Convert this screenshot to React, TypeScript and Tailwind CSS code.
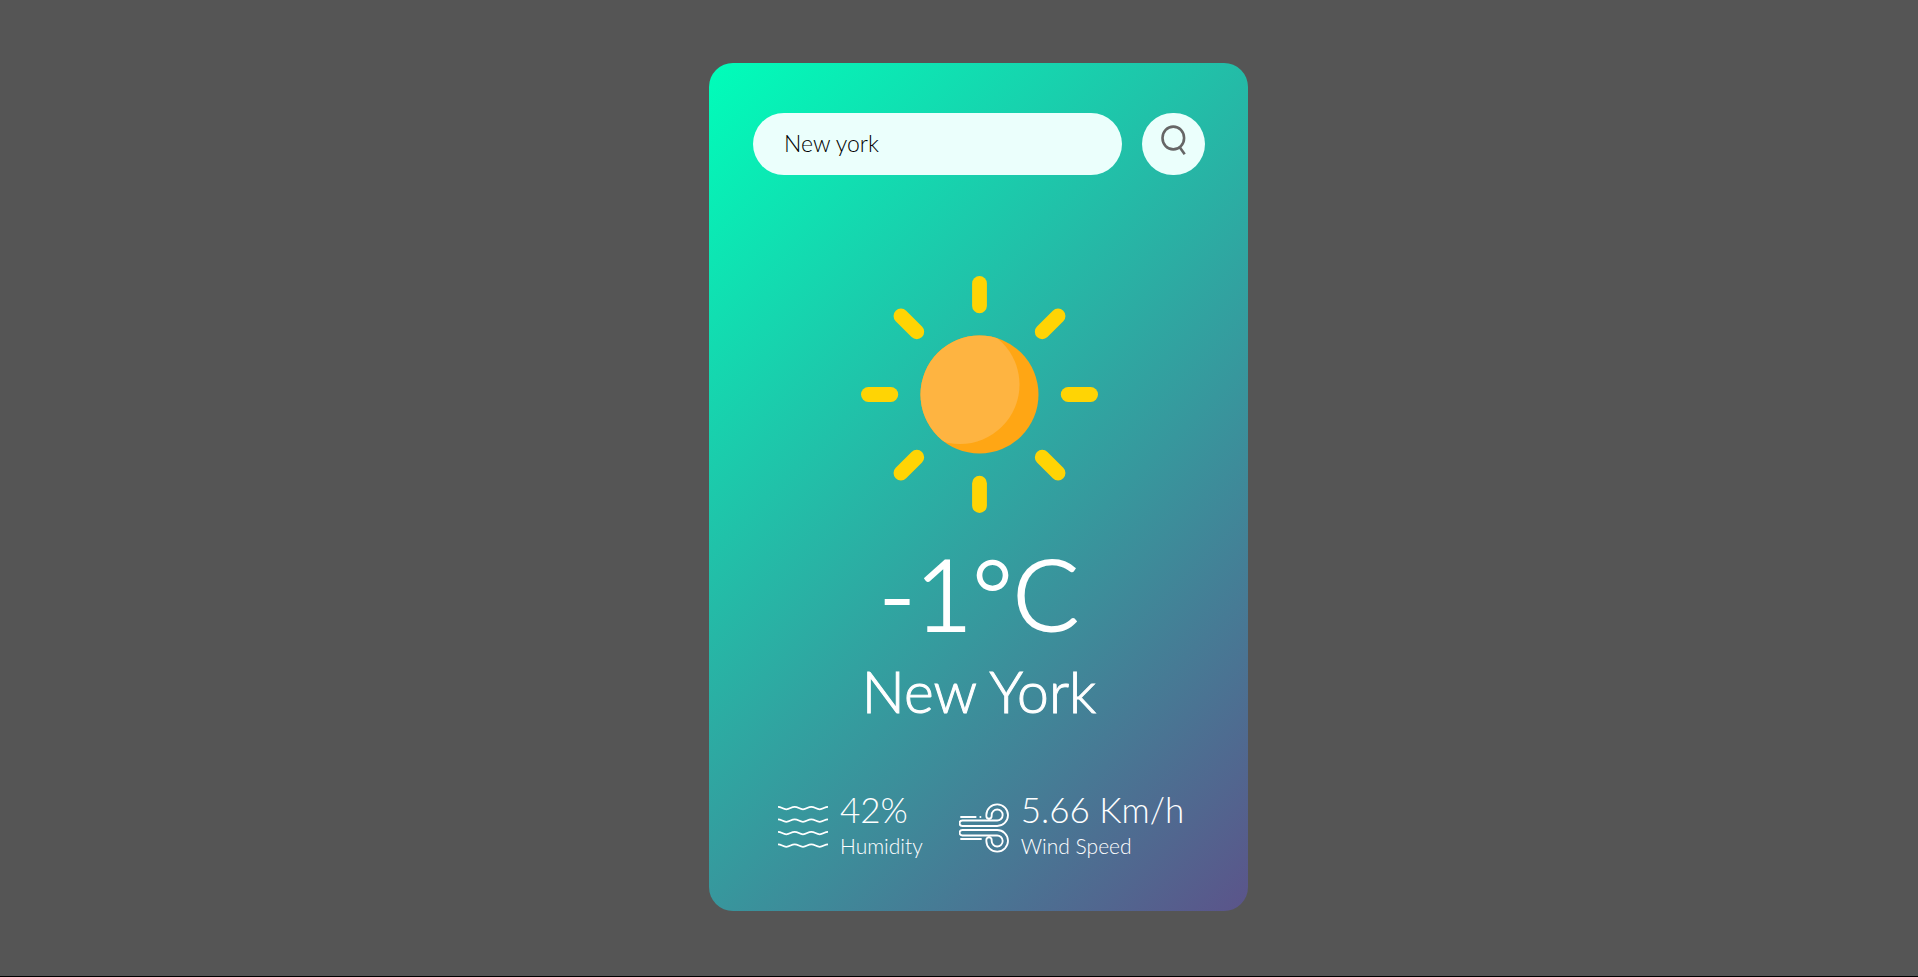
import { useState } from "react";

const rayAngles = [0, 45, 90, 135, 180, 225, 270, 315];

function SunIcon() {
  return (
    <svg className="block size-[238px]" viewBox="-119.5 -119.5 238 238" role="img" aria-label="Clear sky">
      <defs>
        <clipPath id="sun-disc">
          <circle r="59" />
        </clipPath>
      </defs>
      {rayAngles.map((angle) => (
        <rect key={angle} x="-7.4" y="-118.5" width="14.8" height="37.2" rx="7.4" fill="#ffd404" transform={`rotate(${angle})`} />
      ))}
      <circle r="59" fill="#ffa614" />
      <circle cx="-19.5" cy="-10" r="59.5" fill="#feb441" clipPath="url(#sun-disc)" />
    </svg>
  );
}

function SearchIcon() {
  return (
    <svg className="block h-8 w-[26px]" viewBox="0 0 26 32" fill="none" stroke="#666" strokeWidth="2.6" aria-hidden="true">
      <ellipse cx="12.3" cy="13" rx="10.8" ry="11.4" />
      <path d="M18.7 22.2 L23.7 29.2" />
    </svg>
  );
}

function HumidityIcon() {
  return (
    <svg className="mt-4 block size-[50px] shrink-0" viewBox="0 0 50 50" fill="none" stroke="#fff" strokeWidth="1.7" aria-hidden="true">
      {[5, 17.5, 30, 42.5].map((y) => (
        <path
          key={y}
          d={`M0 ${y - 1.2} C3.5 ${y - 1.2} 4.8 ${y + 1.3} 8.3 ${y + 1.3} S13.2 ${y - 1.2} 16.7 ${y - 1.2} S21.5 ${y + 1.3} 25 ${y + 1.3} S29.8 ${y - 1.2} 33.3 ${y - 1.2} S38.2 ${y + 1.3} 41.7 ${y + 1.3} S46.5 ${y - 1.2} 50 ${y - 1.2}`}
        />
      ))}
    </svg>
  );
}

function WindIcon() {
  return (
    <svg className="mt-4 block size-[50px] shrink-0" viewBox="54 37 150 150" fill="none" stroke="#fff" strokeWidth="5.5" strokeLinecap="round" aria-hidden="true">
      <path d="M60 79 H104 M118 79 H118.5" />
      <path d="M64 89.5 H168 A16.5 16.5 0 1 0 152 73 V76 A8 8 0 0 1 136 76 V73 A32.5 32.5 0 1 1 168 106 H64 A8.2 8.2 0 0 1 64 89.5 Z" />
      <path d="M64 134.5 H168 A16.5 16.5 0 1 1 152 151 V148 A8 8 0 0 0 136 148 V151 A32.5 32.5 0 1 0 168 118 H64 A8.2 8.2 0 0 0 64 134.5 Z" />
      <path d="M60 145 H120" />
    </svg>
  );
}

export default function App() {
  const [city, setCity] = useState("New york");

  return (
    <div className="min-h-screen border-b border-black bg-[#555] pt-[63px] pb-16 pl-[39px] font-['Lato','Nunito',sans-serif] font-light">
      <main className="mx-auto w-full max-w-[539px] rounded-3xl bg-linear-[135deg,#00feba,#5b548a] pt-[50px] pb-[50px] pr-[43px] pl-11 text-white">
        <form className="flex items-center gap-5" onSubmit={(event) => event.preventDefault()}>
          <input
            type="text"
            aria-label="City name"
            value={city}
            onChange={(event) => setCity(event.target.value)}
            className="h-[62px] min-w-0 flex-1 rounded-full bg-[#ebfffc] px-[31px] pb-0.5 text-[23px] text-black outline-none"
          />
          <button type="submit" aria-label="Search" className="flex h-[62px] w-[63px] shrink-0 justify-center rounded-full bg-[#ebfffc] pt-3">
            <SearchIcon />
          </button>
        </form>

        <section className="mt-[100px] flex flex-col items-center">
          <SunIcon />
          <h1 className="mt-5 text-[98px] leading-[120px] [-webkit-text-stroke:2px_white]">-1°C</h1>
          <h2 className="text-[57px] leading-[76px] [-webkit-text-stroke:1px_white]">New York</h2>
        </section>

        <section className="mt-[58px] flex gap-9 pl-[25px]">
          <div className="flex gap-3">
            <HumidityIcon />
            <div>
              <p className="text-[35px] leading-[44px]">42%</p>
              <p className="text-[21px] leading-[30px]">Humidity</p>
            </div>
          </div>
          <div className="flex gap-3">
            <WindIcon />
            <div>
              <p className="text-[35px] leading-[44px]">5.66 Km/h</p>
              <p className="text-[21px] leading-[30px]">Wind Speed</p>
            </div>
          </div>
        </section>
      </main>
    </div>
  );
}
